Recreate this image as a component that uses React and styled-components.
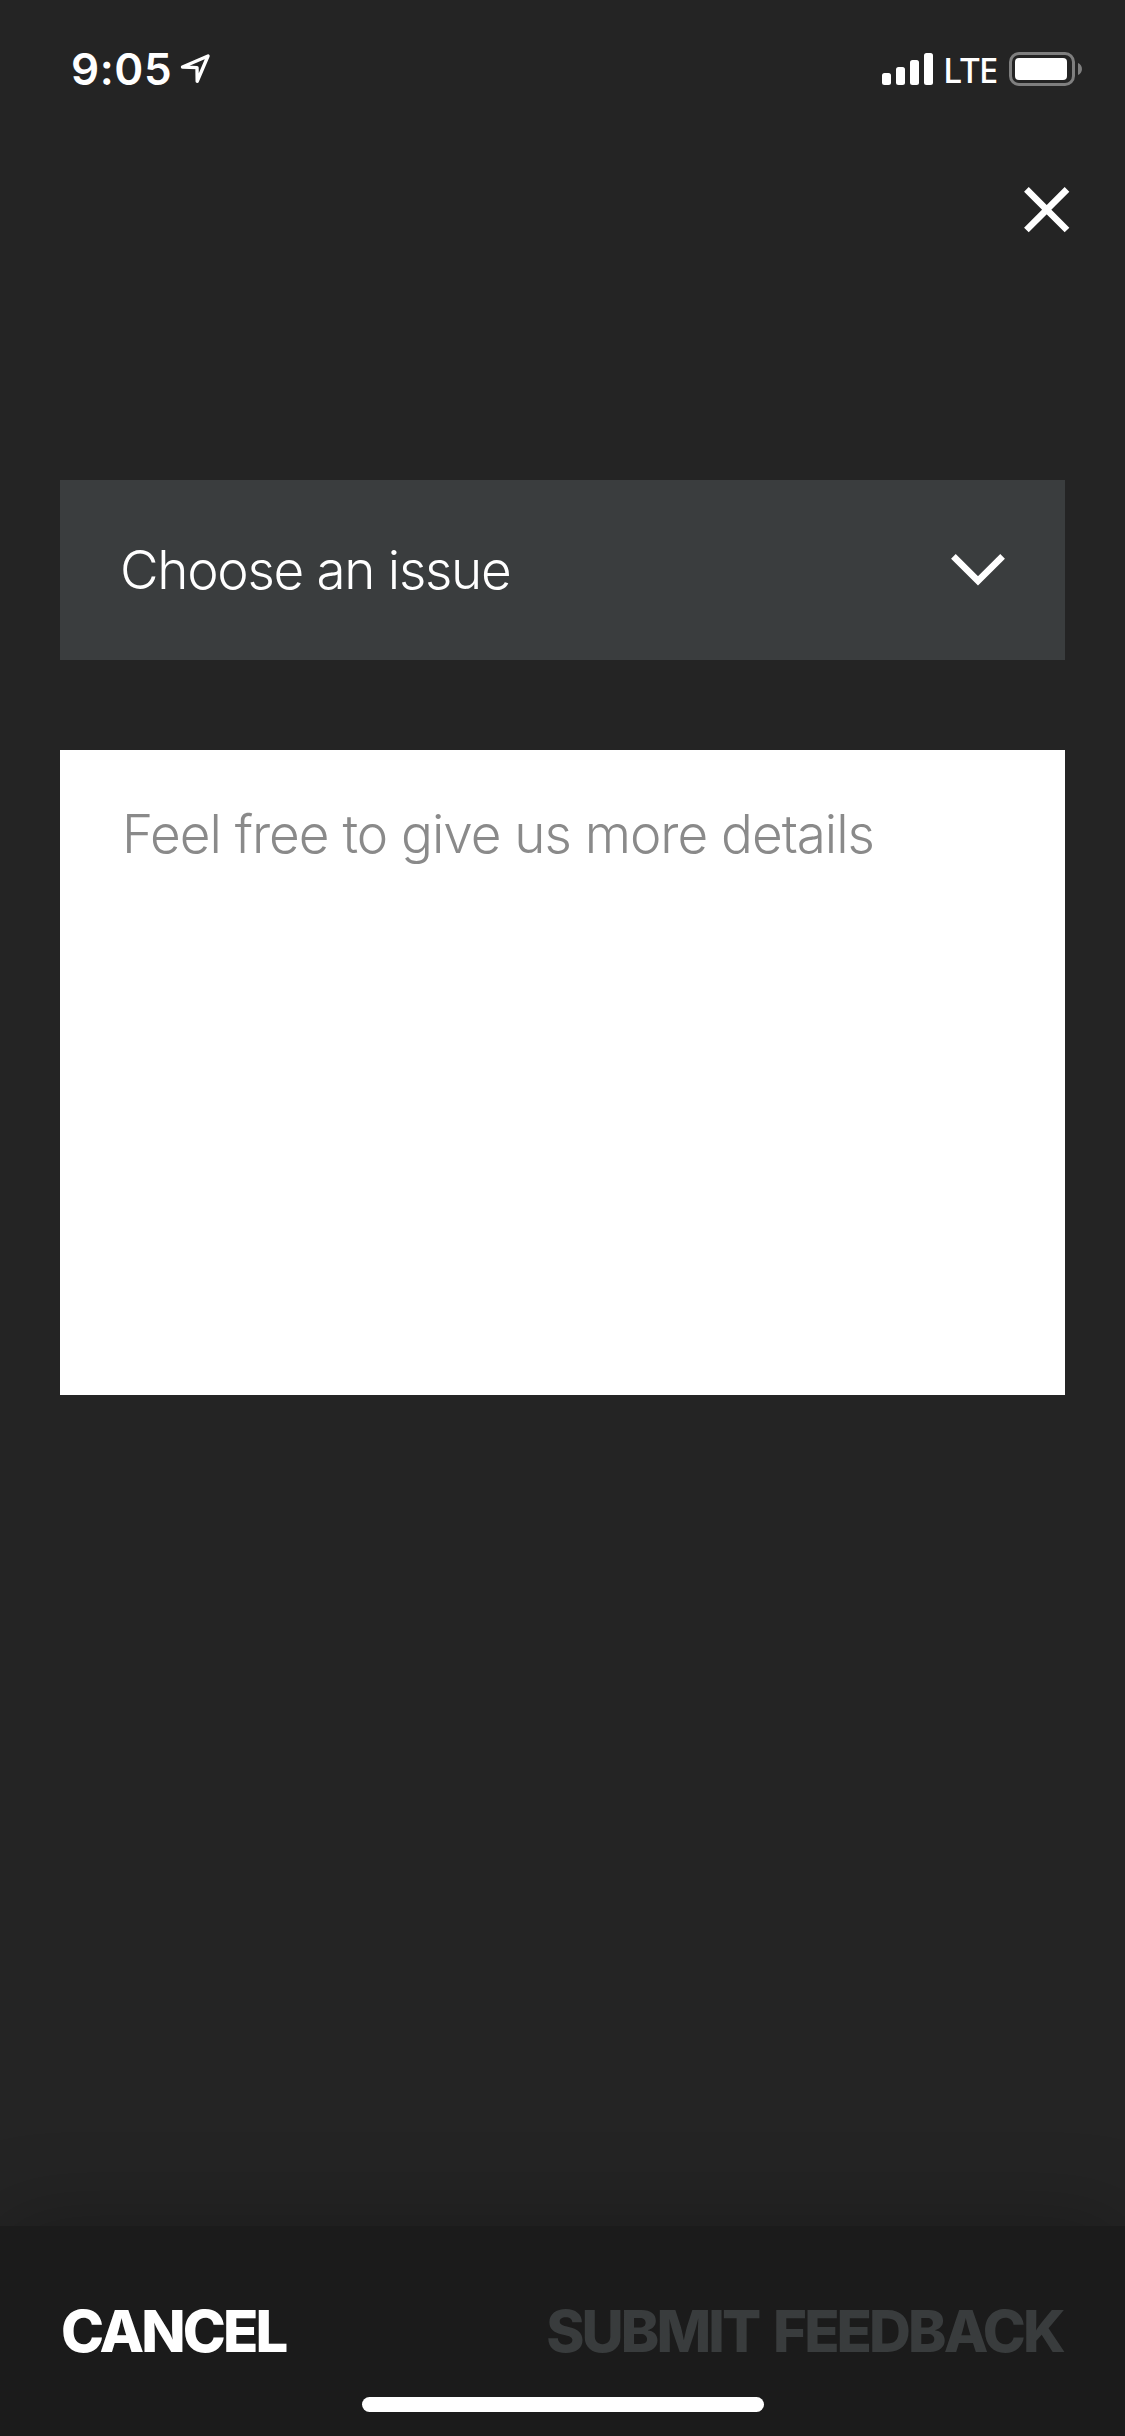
import React from "react";
import styled, { createGlobalStyle } from "styled-components";

const Global = createGlobalStyle`
  * { box-sizing: border-box; }
  body { margin: 0; background: #242424; }
  button { border: 0; padding: 0; margin: 0; background: none; font: inherit; color: inherit; }
`;

const Screen = styled.div`
  display: flex;
  flex-direction: column;
  width: 1125px;
  height: 2436px;
  overflow: hidden;
  background: #242424;
  color: #fff;
  font-family: Inter, "Liberation Sans", sans-serif;
`;

const StatusBar = styled.header`
  display: flex;
  align-items: center;
  justify-content: space-between;
  height: 138px;
  padding: 0 43px 0 71px;
`;

const StatusGroup = styled.div`
  display: flex;
  align-items: center;
`;

const Clock = styled.span`
  width: 109px;
  font-size: 44px;
  font-weight: 580;
  line-height: 48px;
  letter-spacing: 0.6px;
  white-space: nowrap;
`;

const Network = styled.span`
  width: 75px;
  padding: 1px 0 0 9px;
  font-family: "Noto Sans", Inter, sans-serif;
  font-size: 35px;
  font-weight: 500;
  line-height: 40px;
  letter-spacing: -1px;
  white-space: nowrap;
`;

const Icon = styled.svg`
  display: block;
  flex: none;
`;

const TopBar = styled.div`
  display: flex;
  justify-content: flex-end;
  height: 342px;
  padding: 48px 55px 0 0;
`;

const CloseButton = styled.button`
  width: 47px;
  height: 47px;
`;

const Form = styled.main`
  display: flex;
  flex: 1;
  flex-direction: column;
  gap: 90px;
  padding: 0 60px;
`;

const Select = styled.button`
  display: flex;
  align-items: center;
  justify-content: space-between;
  height: 180px;
  padding: 0 59px 0 60px;
  background: #3a3d3e;
`;

const Label = styled.span`
  font-size: 53px;
  font-weight: 330;
  line-height: 64px;
  letter-spacing: ${(p) => p.$spacing};
  color: ${(p) => p.$color};
  white-space: nowrap;
`;

const Details = styled.div`
  display: flex;
  align-items: flex-start;
  height: 645px;
  padding: 52px 62px;
  background: #fff;
`;

const Footer = styled.footer`
  display: flex;
  flex-direction: column;
  justify-content: space-between;
  align-items: center;
  height: 210px;
  padding: 69px 0 24px;
  background: #1b1b1b;
  box-shadow: 0 0 90px rgba(0, 0, 0, 0.28);
`;

const Actions = styled.div`
  display: flex;
  justify-content: space-between;
  width: 100%;
  padding: 0 62px 0 61px;
`;

const Action = styled.button`
  && {
    color: ${(p) => (p.disabled ? "#393c3d" : "#fff")};
    font-size: 58px;
    font-weight: 800;
    line-height: 72px;
    letter-spacing: -2.9px;
    word-spacing: 5px;
    white-space: nowrap;
  }
`;

const HomeIndicator = styled.div`
  width: 402px;
  height: 15px;
  border-radius: 8px;
  background: #fff;
`;

export default function App() {
  return (
    <Screen>
      <Global />
      <StatusBar>
        <StatusGroup>
          <Clock>9:05</Clock>
          <Icon width="32" height="32" viewBox="0 0 32 32" fill="none">
            <path d="M2.5 14 L28 3 L17.2 28.3 L17 14.6 Z" stroke="#fff" strokeWidth="3.4" strokeLinejoin="round" />
          </Icon>
        </StatusGroup>
        <StatusGroup>
          <Icon width="52" height="32" viewBox="0 0 52 32" fill="#fff">
            <rect x="0" y="20" width="9" height="12" rx="2.5" />
            <rect x="14" y="14" width="9" height="18" rx="2.5" />
            <rect x="28" y="7" width="9" height="25" rx="2.5" />
            <rect x="42" y="0" width="9" height="32" rx="2.5" />
          </Icon>
          <Network>LTE</Network>
          <Icon width="73" height="34" viewBox="0 0 73 34" fill="none">
            <rect x="1.5" y="1.5" width="63" height="31" rx="8.5" stroke="#7f7f7f" strokeWidth="3" />
            <rect x="6" y="6" width="52" height="22" rx="4" fill="#fff" />
            <path d="M69 11 C74.3 13 74.3 21 69 23 Z" fill="#7f7f7f" />
          </Icon>
        </StatusGroup>
      </StatusBar>
      <TopBar>
        <CloseButton aria-label="Close">
          <Icon width="47" height="47" viewBox="0 0 47 47">
            <path d="M3.4 3.4 L44 44 M44 3.4 L3.4 44" stroke="#fff" strokeWidth="6.6" />
          </Icon>
        </CloseButton>
      </TopBar>
      <Form>
        <Select>
          <Label $color="#fff" $spacing="-1.3px">Choose an issue</Label>
          <Icon width="56" height="34" viewBox="0 0 56 34" fill="none">
            <path d="M3.4 3.3 L28 27.9 L52.6 3.3" stroke="#fff" strokeWidth="6.6" />
          </Icon>
        </Select>
        <Details>
          <Label $color="#8a8a8a" $spacing="-1.02px">Feel free to give us more details</Label>
        </Details>
      </Form>
      <Footer>
        <Actions>
          <Action>CANCEL</Action>
          <Action disabled>SUBMIT FEEDBACK</Action>
        </Actions>
        <HomeIndicator />
      </Footer>
    </Screen>
  );
}
